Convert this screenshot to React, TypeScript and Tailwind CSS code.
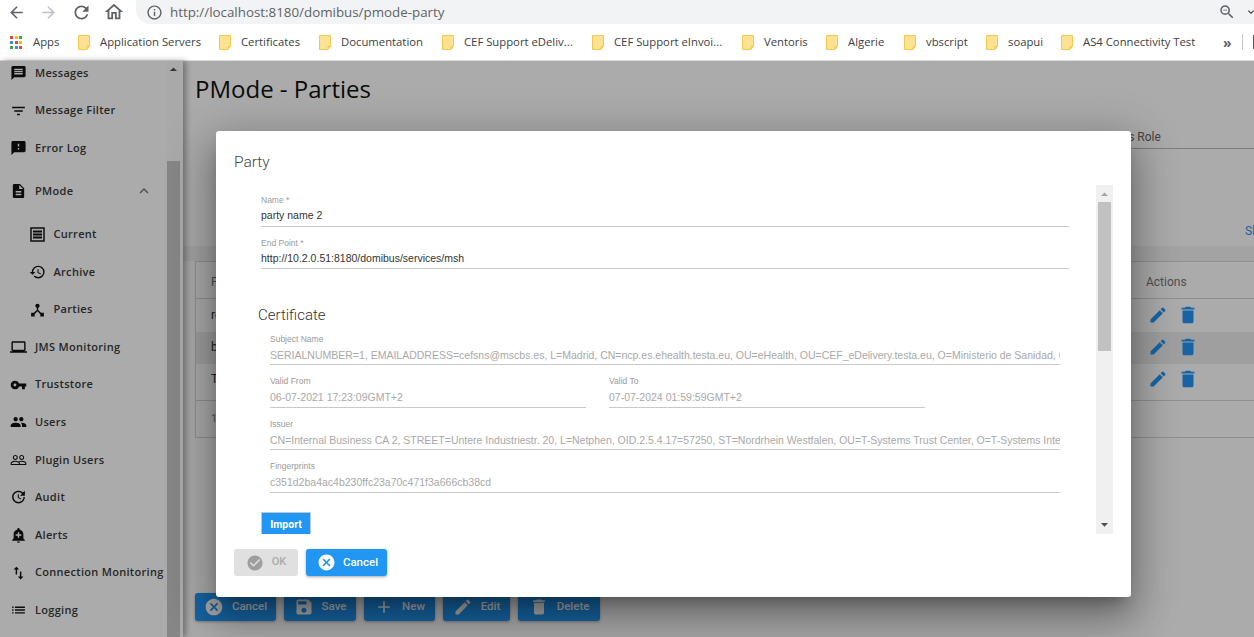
import React from "react";
import {
  MdArrowBack,
  MdArrowForward,
  MdRefresh,
  MdOutlineHome,
  MdInfoOutline,
  MdOutlineZoomOut,
  MdExpandMore,
  MdMessage,
  MdFilterList,
  MdSmsFailed,
  MdDescription,
  MdExpandLess,
  MdHistory,
  MdDeviceHub,
  MdLaptop,
  MdVpnKey,
  MdPeople,
  MdPeopleOutline,
  MdUpdate,
  MdAddAlert,
  MdSwapVert,
  MdList,
  MdCheckCircle,
  MdCancel,
  MdSave,
  MdAdd,
  MdEdit,
  MdDelete,
  MdArrowDropUp,
  MdArrowDropDown,
} from "react-icons/md";

const bookmarks = [
  { label: "Application Servers", w: "w-[141px]" },
  { label: "Certificates", w: "w-[100px]" },
  { label: "Documentation", w: "w-[123px]" },
  { label: "CEF Support eDeliv...", w: "w-[150px]" },
  { label: "CEF Support eInvoi...", w: "w-[150px]" },
  { label: "Ventoris", w: "w-[84px]" },
  { label: "Algerie", w: "w-[78px]" },
  { label: "vbscript", w: "w-[82px]" },
  { label: "soapui", w: "w-[75px]" },
  { label: "AS4 Connectivity Test", w: "w-[157px]" },
];

function Folder() {
  return (
    <svg width="12" height="15" viewBox="0 0 12 15" className="shrink-0">
      <path d="M0.5 0.5H11.5V11.5L9 14.5H0.5Z" fill="#fde293" stroke="#f2c94c" />
      <path d="M9 14.5V11.5H11.5" fill="none" stroke="#f2c94c" />
    </svg>
  );
}

function AppsIcon() {
  const colors = [
    "bg-[#ea4335]", "bg-[#fbbc04]", "bg-[#34a853]",
    "bg-[#4285f4]", "bg-[#ea4335]", "bg-[#fbbc04]",
    "bg-[#34a853]", "bg-[#4285f4]", "bg-[#ea4335]",
  ];
  return (
    <div className="grid grid-cols-3 gap-[2px] w-[12px] h-[12px]">
      {colors.map((c, i) => (
        <span key={i} className={`${c} w-[3px] h-[3px]`} />
      ))}
    </div>
  );
}

function CurrentIcon() {
  return (
    <svg width="17" height="17" viewBox="0 0 17 17">
      <rect x="2" y="2" width="13" height="13" fill="none" stroke="#222" strokeWidth="1.6" />
      <path d="M4 5.5H13M4 8.5H13M4 11.5H13" stroke="#111" strokeWidth="1.8" />
    </svg>
  );
}

function NavRow({
  icon,
  label,
  sub,
  tall,
  chevron,
}: {
  icon: React.ReactNode;
  label: string;
  sub?: boolean;
  tall?: boolean;
  chevron?: boolean;
}) {
  return (
    <div
      className={`flex items-center ${tall ? "h-[48.5px]" : "h-[37.6px]"} ${
        sub ? "pl-[29px]" : "pl-[10px]"
      }`}
    >
      <span className="w-[17px] h-[17px] flex items-center justify-center text-[18px] text-[#111]">
        {icon}
      </span>
      <span
        className={`${
          sub ? "ml-[7.5px]" : "ml-[8px]"
        } text-[11px] font-semibold tracking-[0.3px] text-[#3a3a3a] whitespace-nowrap`}
      >
        {label}
      </span>
      {chevron && <MdExpandLess className="ml-[62px] text-[18px] text-[#777]" />}
    </div>
  );
}

function Sidebar() {
  return (
    <div className="relative w-[183px] shrink-0 overflow-hidden bg-white shadow-[3px_0_6px_rgba(0,0,0,0.35)] z-10">
      <div className="mt-[-6.75px] font-['Open_Sans',sans-serif]">
        <NavRow icon={<MdMessage />} label="Messages" />
        <NavRow icon={<MdFilterList />} label="Message Filter" />
        <NavRow icon={<MdSmsFailed />} label="Error Log" />
        <NavRow icon={<MdDescription />} label="PMode" tall chevron />
        <NavRow icon={<CurrentIcon />} label="Current" sub />
        <NavRow icon={<MdHistory />} label="Archive" sub />
        <NavRow icon={<MdDeviceHub />} label="Parties" sub />
        <NavRow icon={<MdLaptop />} label="JMS Monitoring" />
        <NavRow icon={<MdVpnKey className="text-[20px]" />} label="Truststore" />
        <NavRow icon={<MdPeople />} label="Users" />
        <NavRow icon={<MdPeopleOutline />} label="Plugin Users" />
        <NavRow icon={<MdUpdate />} label="Audit" />
        <NavRow icon={<MdAddAlert />} label="Alerts" />
        <NavRow icon={<MdSwapVert />} label="Connection Monitoring" />
        <NavRow icon={<MdList />} label="Logging" />
      </div>
      <div className="absolute top-0 bottom-0 left-[167px] w-[13px] bg-[#fdfdfd]">
        <MdArrowDropUp className="absolute top-0 left-[-2px] text-[17px] text-[#505050]" />
        <div className="absolute top-[100px] bottom-0 left-0 right-0 bg-[#c8c8c8]" />
      </div>
    </div>
  );
}

function BgButton({ icon, label, w }: { icon: React.ReactNode; label: string; w: string }) {
  return (
    <div
      className={`${w} h-[28px] flex items-center justify-center gap-[8px] rounded-[3px] bg-[#2196f3] text-white text-[11.5px] font-medium shadow-[0_1px_3px_rgba(0,0,0,0.3)]`}
    >
      <span className="text-[20px]">{icon}</span>
      {label}
    </div>
  );
}

function Background() {
  const rows = [
    { name: "red_gw", cls: "h-[33px] bg-white pb-[2px]" },
    { name: "blue_gw", cls: "h-[32px] bg-[#eeeeee] pb-[2px]" },
    { name: "TEST", cls: "h-[36px] bg-white pb-[6px]" },
  ];
  return (
    <div className="flex-1 min-w-0 overflow-hidden bg-white pl-[12px] font-['Roboto',sans-serif]">
      <h1 className="h-[57px] pt-[10px] text-[24px] leading-[36px] font-['Open_Sans',sans-serif] text-[#111]">
        PMode - Parties
      </h1>
      <div className="h-[14px]" />
      <div className="flex justify-end">
        <div className="w-[170px] h-[17px] border-b border-[#bbb] pl-[7px] text-[12px] leading-[11px] text-[#666]">
          Process Role
        </div>
      </div>
      <div className="flex justify-end h-[97px] items-end pb-[6px]">
        <span className="w-[9px] overflow-hidden text-[12px] text-[#2196f3] whitespace-nowrap">Show</span>
      </div>
      <div className="h-[15px] bg-[#f4f4f4] -ml-[12px]" />
      <div className="border-l border-[#d5d5d5]">
        <div className="h-[38px] border-y border-[#d5d5d5] flex items-center pt-[4px] pl-[15px] text-[12px] text-[#777]">
          <span className="flex-1">Party Name</span>
          <span className="w-[108px]">Actions</span>
        </div>
        {rows.map((r) => (
          <div key={r.name} className={`${r.cls} flex items-center pl-[15px] text-[12px] text-[#333]`}>
            <span className="flex-1">{r.name}</span>
            <span className="w-[108px] flex items-center gap-[9px] pl-[2px] text-[#2196f3]">
              <MdEdit className="text-[20px]" />
              <MdDelete className="text-[22px]" />
            </span>
          </div>
        ))}
        <div className="h-[38px] border-y border-[#d5d5d5] flex items-center pl-[15px] text-[11px] text-[#888]">
          1 total
        </div>
      </div>
      <div className="mt-[155px] flex gap-[8px]">
        <BgButton icon={<MdCancel />} label="Cancel" w="w-[81px]" />
        <BgButton icon={<MdSave />} label="Save" w="w-[72px]" />
        <BgButton icon={<MdAdd />} label="New" w="w-[71px]" />
        <BgButton icon={<MdEdit />} label="Edit" w="w-[67px]" />
        <BgButton icon={<MdDelete />} label="Delete" w="w-[82px]" />
      </div>
    </div>
  );
}

function Field({
  label,
  value,
  disabled,
  className,
}: {
  label: string;
  value: string;
  disabled?: boolean;
  className?: string;
}) {
  return (
    <div className={className}>
      <div className="h-[10px] text-[8.5px] leading-[10px] text-[#9a9a9a]">{label}</div>
      <div
        className={`h-[21.5px] border-b border-[#c9c9c9] overflow-hidden whitespace-nowrap text-[10.5px] leading-[16px] ${
          disabled ? "pt-[3px] text-[#a8a8a8]" : "pt-[2px] text-[#333]"
        }`}
      >
        {value}
      </div>
    </div>
  );
}

function PartyDialog() {
  return (
    <div className="absolute inset-0 z-20 bg-black/[0.33] pl-[216px] pt-[70px]">
      <div className="w-[915px] h-[466px] rounded-[3px] bg-white shadow-[0_11px_15px_-7px_rgba(0,0,0,0.3),0_24px_38px_3px_rgba(0,0,0,0.2),0_9px_46px_8px_rgba(0,0,0,0.2)] font-['Liberation_Sans',sans-serif]">
        <div className="h-[54px] pt-[21px] pl-[18px] text-[15.5px] leading-[20px] font-light font-['Roboto',sans-serif] text-[#444]">
          Party
        </div>
        <div className="flex h-[349px] ml-[18px] w-[879px]">
          <div className="flex-1 min-w-0 overflow-hidden">
            <div className="pt-[10px] pl-[27px] w-[835px] flex flex-col gap-[11px]">
              <Field label="Name *" value="party name 2" />
              <Field label="End Point *" value="http://10.2.0.51:8180/domibus/services/msh" />
            </div>
            <div className="mt-[34.5px] ml-[24px] text-[15px] leading-[22px] font-light text-[#333] font-['Roboto',sans-serif]">Certificate</div>
            <div className="mt-[8px] ml-[36px] w-[790px] flex flex-col gap-[11px]">
              <Field
                disabled
                label="Subject Name"
                value="SERIALNUMBER=1, EMAILADDRESS=cefsns@mscbs.es, L=Madrid, CN=ncp.es.ehealth.testa.eu, OU=eHealth, OU=CEF_eDelivery.testa.eu, O=Ministerio de Sanidad, C=ES"
              />
              <div className="flex gap-[23px]">
                <Field disabled className="w-[316px]" label="Valid From" value="06-07-2021 17:23:09GMT+2" />
                <Field disabled className="w-[316px]" label="Valid To" value="07-07-2024 01:59:59GMT+2" />
              </div>
              <Field
                disabled
                label="Issuer"
                value="CN=Internal Business CA 2, STREET=Untere Industriestr. 20, L=Netphen, OID.2.5.4.17=57250, ST=Nordrhein Westfalen, OU=T-Systems Trust Center, O=T-Systems International GmbH, C=DE"
              />
              <Field disabled label="Fingerprints" value="c351d2ba4ac4b230ffc23a70c471f3a666cb38cd" />
            </div>
            <div className="mt-[19.5px] ml-[27px] w-[50px] h-[24px] bg-[#2196f3] border-t border-x border-[#b9c9d6] flex items-center justify-center text-white text-[10.5px] font-bold font-['Roboto',sans-serif]">
              Import
            </div>
          </div>
          <div className="relative w-[17px] shrink-0 bg-[#f0f0f0]">
            <MdArrowDropUp className="absolute top-[1px] left-[0px] text-[17px] text-[#a3a3a3]" />
            <div className="absolute top-[17px] left-[2px] w-[13px] h-[149px] bg-[#c1c1c1]" />
            <MdArrowDropDown className="absolute bottom-[1px] left-[0px] text-[17px] text-[#505050]" />
          </div>
        </div>
        <div className="flex gap-[8px] mt-[15px] ml-[18px] font-['Roboto',sans-serif]">
          <div className="w-[64px] h-[27px] flex items-center justify-center gap-[8px] rounded-[3px] bg-[#e0e0e0] text-[#aaaaaa] text-[11px] font-medium">
            <MdCheckCircle className="text-[18px] text-[#9e9e9e]" />
            OK
          </div>
          <div className="w-[81px] h-[27px] flex items-center justify-center gap-[7px] pl-[2px] rounded-[3px] bg-[#2196f3] text-white text-[11.5px] font-medium shadow-[0_1px_3px_rgba(0,0,0,0.35)]">
            <MdCancel className="text-[19px]" />
            Cancel
          </div>
        </div>
      </div>
    </div>
  );
}

export default function App() {
  return (
    <div className="h-screen flex flex-col overflow-hidden bg-white">
      <div className="h-[24px] flex items-center shrink-0 text-[#5f6368]">
        <MdArrowBack className="ml-[7px] text-[19px]" />
        <MdArrowForward className="ml-[13px] text-[19px] text-[#bdc1c6]" />
        <MdRefresh className="ml-[13px] text-[21px]" />
        <MdOutlineHome className="ml-[11px] text-[22px]" />
        <div className="ml-[11px] flex-1 h-full bg-[#f1f3f4] rounded-bl-[14px] flex items-center pl-[10px]">
          <MdInfoOutline className="text-[17px]" />
          <span className="ml-[7px] text-[13.35px] font-['Open_Sans',sans-serif] text-[#5f6368] whitespace-nowrap">
            http://localhost:8180/domibus/pmode-party
          </span>
          <MdOutlineZoomOut className="ml-auto text-[18px]" />
          <MdExpandMore className="ml-[9px] -mr-[3px] shrink-0 text-[12px] text-[#333]" />
        </div>
      </div>
      <div className="h-[37px] shrink-0 flex items-center border-b border-[#dadce0] pl-[10px] font-['Open_Sans',sans-serif] text-[11.3px] text-[#3c4043] whitespace-nowrap">
        <AppsIcon />
        <span className="ml-[11px] w-[45px]">Apps</span>
        {bookmarks.map((b) => (
          <div key={b.label} className={`flex items-center shrink-0 ${b.w}`}>
            <Folder />
            <span className="ml-[10px]">{b.label}</span>
          </div>
        ))}
        <span className="ml-[5px] text-[14px] font-bold text-[#5f6368]">»</span>
        <span className="ml-[10px] h-[16px] border-l border-[#c8c8c8]" />
        <span className="ml-[10px] h-[14px] border-l border-[#555]" />
      </div>
      <div className="relative flex flex-1 min-h-0">
        <Sidebar />
        <Background />
        <PartyDialog />
      </div>
    </div>
  );
}
